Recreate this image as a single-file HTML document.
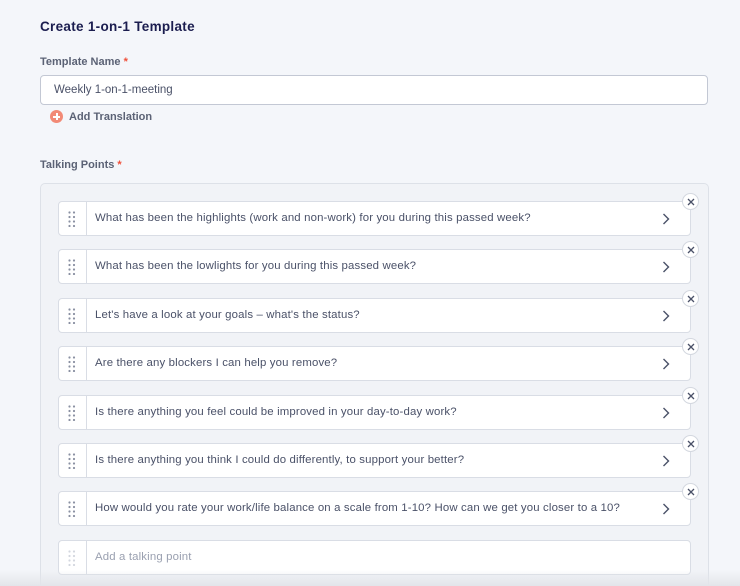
<!DOCTYPE html>
<html style="overflow:hidden;height:586px"><head><style>
*{box-sizing:border-box;margin:0;padding:0}
body{width:740px;height:586px;overflow:hidden;background:#f4f6fa;font-family:"Liberation Sans",sans-serif;position:relative;color:#4a5168}
.t{position:absolute;left:40px;top:19px;font-size:13.5px;font-weight:bold;color:#1b1d4f;letter-spacing:.3px}
.l{position:absolute;left:40px;font-size:11px;font-weight:bold;color:#5b6275}
.l b{color:#f0503a}
.inp{position:absolute;left:40px;top:75px;width:668px;height:30px;background:#fff;border:1px solid #c3c8d4;border-radius:4px;font-size:11.5px;padding:8px 0 0 13px;color:#4a5168}
.at{position:absolute;left:50px;top:110px;font-size:11px;font-weight:bold;color:#5b6275}
.at i{display:inline-block;width:13px;height:13px;border-radius:50%;background:#f28a76;vertical-align:-3px;margin-right:6px;position:relative}
.at i:before{content:"";position:absolute;left:3px;top:5.5px;width:7px;height:2px;background:#fff}
.at i:after{content:"";position:absolute;left:5.5px;top:3px;width:2px;height:7px;background:#fff}
.box{position:absolute;left:40px;top:183px;width:669px;height:403px;border:1px solid #dde1e8;border-bottom:none;border-radius:5px 5px 0 0;background:#f1f3f7}
.it{position:absolute;left:58px;width:633px;height:35px;background:#fff;border:1px solid #d9dde5;border-radius:4px}
.g{position:absolute;left:0;top:0;width:28px;height:100%;border-right:1px solid #d9dde5}
.g svg{position:absolute;left:9px;top:9px}
.tx{position:absolute;left:36px;top:10px;font-size:11.4px;color:#4a5168;letter-spacing:.15px}
.ch{position:absolute;right:20px;top:11px}
.x{position:absolute;left:682px;width:17px;height:17px;border-radius:50%;background:#fff;border:1px solid #d3d7df}
.x svg{position:absolute;left:4px;top:4px}
.sh{position:absolute;left:0;top:570px;width:740px;height:16px;background:linear-gradient(rgba(244,246,250,0),#e3e5ea)}
</style></head><body>
<div class="t">Create 1-on-1 Template</div>
<div class="l" style="top:56px">Template Name <b>*</b></div>
<div class="inp">Weekly 1-on-1-meeting</div>
<div class="at"><i></i>Add Translation</div>
<div class="l" style="top:159px">Talking Points <b>*</b></div>
<div class="box"></div>

<div class="it" style="top:201px"><div class="g"><svg width="8" height="16"><g fill="#8a90a2"><circle cx="1.5" cy="1.5" r="1.1"/><circle cx="6" cy="1.5" r="1.1"/><circle cx="1.5" cy="6" r="1.1"/><circle cx="6" cy="6" r="1.1"/><circle cx="1.5" cy="10.5" r="1.1"/><circle cx="6" cy="10.5" r="1.1"/><circle cx="1.5" cy="15" r="1.1"/><circle cx="6" cy="15" r="1.1"/></g></svg></div><div class="tx">What has been the highlights (work and non-work) for you during this passed week?</div><svg class="ch" width="8" height="12"><path d="M1.5 1l5 5-5 5" fill="none" stroke="#4a5168" stroke-width="1.4"/></svg></div>
<div class="x" style="top:193px"><svg width="8" height="8"><path d="M1 1l6 6M7 1l-6 6" stroke="#4a5168" stroke-width="1.3"/></svg></div>

<div class="it" style="top:249px"><div class="g"><svg width="8" height="16"><g fill="#8a90a2"><circle cx="1.5" cy="1.5" r="1.1"/><circle cx="6" cy="1.5" r="1.1"/><circle cx="1.5" cy="6" r="1.1"/><circle cx="6" cy="6" r="1.1"/><circle cx="1.5" cy="10.5" r="1.1"/><circle cx="6" cy="10.5" r="1.1"/><circle cx="1.5" cy="15" r="1.1"/><circle cx="6" cy="15" r="1.1"/></g></svg></div><div class="tx">What has been the lowlights for you during this passed week?</div><svg class="ch" width="8" height="12"><path d="M1.5 1l5 5-5 5" fill="none" stroke="#4a5168" stroke-width="1.4"/></svg></div>
<div class="x" style="top:241px"><svg width="8" height="8"><path d="M1 1l6 6M7 1l-6 6" stroke="#4a5168" stroke-width="1.3"/></svg></div>

<div class="it" style="top:298px"><div class="g"><svg width="8" height="16"><g fill="#8a90a2"><circle cx="1.5" cy="1.5" r="1.1"/><circle cx="6" cy="1.5" r="1.1"/><circle cx="1.5" cy="6" r="1.1"/><circle cx="6" cy="6" r="1.1"/><circle cx="1.5" cy="10.5" r="1.1"/><circle cx="6" cy="10.5" r="1.1"/><circle cx="1.5" cy="15" r="1.1"/><circle cx="6" cy="15" r="1.1"/></g></svg></div><div class="tx">Let's have a look at your goals – what's the status?</div><svg class="ch" width="8" height="12"><path d="M1.5 1l5 5-5 5" fill="none" stroke="#4a5168" stroke-width="1.4"/></svg></div>
<div class="x" style="top:290px"><svg width="8" height="8"><path d="M1 1l6 6M7 1l-6 6" stroke="#4a5168" stroke-width="1.3"/></svg></div>

<div class="it" style="top:346px"><div class="g"><svg width="8" height="16"><g fill="#8a90a2"><circle cx="1.5" cy="1.5" r="1.1"/><circle cx="6" cy="1.5" r="1.1"/><circle cx="1.5" cy="6" r="1.1"/><circle cx="6" cy="6" r="1.1"/><circle cx="1.5" cy="10.5" r="1.1"/><circle cx="6" cy="10.5" r="1.1"/><circle cx="1.5" cy="15" r="1.1"/><circle cx="6" cy="15" r="1.1"/></g></svg></div><div class="tx">Are there any blockers I can help you remove?</div><svg class="ch" width="8" height="12"><path d="M1.5 1l5 5-5 5" fill="none" stroke="#4a5168" stroke-width="1.4"/></svg></div>
<div class="x" style="top:338px"><svg width="8" height="8"><path d="M1 1l6 6M7 1l-6 6" stroke="#4a5168" stroke-width="1.3"/></svg></div>

<div class="it" style="top:395px"><div class="g"><svg width="8" height="16"><g fill="#8a90a2"><circle cx="1.5" cy="1.5" r="1.1"/><circle cx="6" cy="1.5" r="1.1"/><circle cx="1.5" cy="6" r="1.1"/><circle cx="6" cy="6" r="1.1"/><circle cx="1.5" cy="10.5" r="1.1"/><circle cx="6" cy="10.5" r="1.1"/><circle cx="1.5" cy="15" r="1.1"/><circle cx="6" cy="15" r="1.1"/></g></svg></div><div class="tx">Is there anything you feel could be improved in your day-to-day work?</div><svg class="ch" width="8" height="12"><path d="M1.5 1l5 5-5 5" fill="none" stroke="#4a5168" stroke-width="1.4"/></svg></div>
<div class="x" style="top:387px"><svg width="8" height="8"><path d="M1 1l6 6M7 1l-6 6" stroke="#4a5168" stroke-width="1.3"/></svg></div>

<div class="it" style="top:443px"><div class="g"><svg width="8" height="16"><g fill="#8a90a2"><circle cx="1.5" cy="1.5" r="1.1"/><circle cx="6" cy="1.5" r="1.1"/><circle cx="1.5" cy="6" r="1.1"/><circle cx="6" cy="6" r="1.1"/><circle cx="1.5" cy="10.5" r="1.1"/><circle cx="6" cy="10.5" r="1.1"/><circle cx="1.5" cy="15" r="1.1"/><circle cx="6" cy="15" r="1.1"/></g></svg></div><div class="tx">Is there anything you think I could do differently, to support your better?</div><svg class="ch" width="8" height="12"><path d="M1.5 1l5 5-5 5" fill="none" stroke="#4a5168" stroke-width="1.4"/></svg></div>
<div class="x" style="top:435px"><svg width="8" height="8"><path d="M1 1l6 6M7 1l-6 6" stroke="#4a5168" stroke-width="1.3"/></svg></div>

<div class="it" style="top:491px"><div class="g"><svg width="8" height="16"><g fill="#8a90a2"><circle cx="1.5" cy="1.5" r="1.1"/><circle cx="6" cy="1.5" r="1.1"/><circle cx="1.5" cy="6" r="1.1"/><circle cx="6" cy="6" r="1.1"/><circle cx="1.5" cy="10.5" r="1.1"/><circle cx="6" cy="10.5" r="1.1"/><circle cx="1.5" cy="15" r="1.1"/><circle cx="6" cy="15" r="1.1"/></g></svg></div><div class="tx">How would you rate your work/life balance on a scale from 1-10? How can we get you closer to a 10?</div><svg class="ch" width="8" height="12"><path d="M1.5 1l5 5-5 5" fill="none" stroke="#4a5168" stroke-width="1.4"/></svg></div>
<div class="x" style="top:483px"><svg width="8" height="8"><path d="M1 1l6 6M7 1l-6 6" stroke="#4a5168" stroke-width="1.3"/></svg></div>

<div class="it" style="top:540px"><div class="g"><svg width="8" height="16"><g fill="#d3d7df"><circle cx="1.5" cy="1.5" r="1.1"/><circle cx="6" cy="1.5" r="1.1"/><circle cx="1.5" cy="6" r="1.1"/><circle cx="6" cy="6" r="1.1"/><circle cx="1.5" cy="10.5" r="1.1"/><circle cx="6" cy="10.5" r="1.1"/><circle cx="1.5" cy="15" r="1.1"/><circle cx="6" cy="15" r="1.1"/></g></svg></div><div class="tx" style="color:#9aa0b0">Add a talking point</div></div>
<div class="sh"></div>
</body></html>
